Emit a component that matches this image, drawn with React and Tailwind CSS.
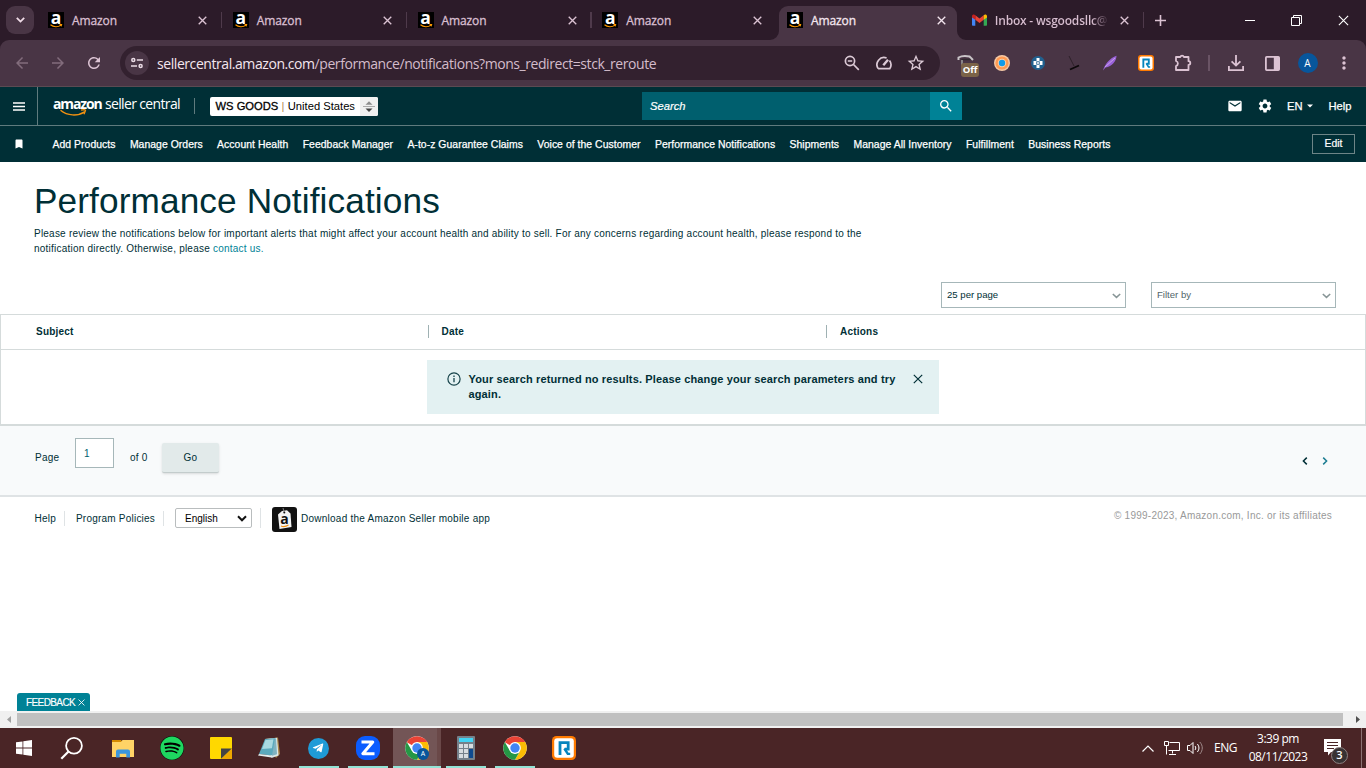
import { useState } from "react";
import {
  MdArrowBack,
  MdArrowForward,
  MdRefresh,
  MdStarOutline,
  MdSearch,
  MdMail,
  MdSettings,
  MdBookmark,
  MdMoreVert,
} from "react-icons/md";
import { FaSpotify, FaTelegramPlane } from "react-icons/fa";

const TABS = [
  { id: 1, title: "Amazon", separator: true },
  { id: 2, title: "Amazon", separator: true },
  { id: 3, title: "Amazon", separator: true },
  { id: 4, title: "Amazon" },
  { id: 5, title: "Amazon", active: true },
];

const NAV_LINKS = [
  "Add Products",
  "Manage Orders",
  "Account Health",
  "Feedback Manager",
  "A-to-z Guarantee Claims",
  "Voice of the Customer",
  "Performance Notifications",
  "Shipments",
  "Manage All Inventory",
  "Fulfillment",
  "Business Reports",
];

const AmazonIcon = () => (
  <div className="relative flex h-4 w-4 shrink-0 justify-center bg-black">
    <span className="mt-[-5px] font-['Open_Sans',sans-serif] text-[17.5px] font-bold leading-[21px] text-white">a</span>
    <svg className="absolute inset-0" width="16" height="16" viewBox="0 0 16 16" fill="none">
      <path d="M2.5 12.8C5.5 15.2 10 15.2 12.7 13.4M11.6 12.6h2l-.5 1.8" stroke="#f90" strokeWidth="1.1" />
    </svg>
  </div>
);

const CloseIcon = ({ size = 9, color = "#dcc3d3", width = 1.5 }) => (
  <svg width={size} height={size} viewBox="0 0 10 10" fill="none" className="shrink-0">
    <path d="M.8.8l8.4 8.4M9.2.8L.8 9.2" stroke={color} strokeWidth={width} />
  </svg>
);

const ChromeLogo = ({ size = 24 }) => (
  <svg width={size} height={size} viewBox="0 0 48 48">
    <circle cx="24" cy="24" r="23.5" fill="#fff" />
    <path d="M24 24L3.6 12.3A23.6 23.6 0 0 1 44.4 12.2H24z" fill="#ea4335" />
    <path d="M24 12.2h20.4A23.6 23.6 0 0 1 24 47.6L34.2 30z" fill="#fbbc04" />
    <path d="M3.6 12.2A23.6 23.6 0 0 0 24 47.6L34 30 24 35 14 30z" fill="#259745" />
    <circle cx="24" cy="24" r="11.8" fill="#fff" />
    <circle cx="24" cy="24" r="9.4" fill="#4285f4" />
  </svg>
);

const RingIcon = ({ size = 24 }) => (
  <svg width={size} height={size} viewBox="0 0 24 24" fill="none">
    <rect width="24" height="24" rx="4.5" fill="#ff7a00" />
    <rect x="2.2" y="2.2" width="19.6" height="19.6" rx="3" fill="#fff" />
    <path d="M8 19V6.7h8.2v6.5h-3.6" stroke="#0684bd" strokeWidth="2.8" />
    <path d="M12.4 12.5l3.4 5.4h2.4" stroke="#0684bd" strokeWidth="2.4" />
  </svg>
);

const BrowserTabs = () => (
  <div className="flex h-10 items-start bg-[#2c1b29] font-['Open_Sans',sans-serif]">
    <div className="ml-1.5 mr-1.5 mt-1.5 flex h-7 w-7 items-center justify-center rounded-[9px] bg-[#493545]">
      <svg width="9" height="6" viewBox="0 0 9 6" fill="none">
        <path d="M.8.9l3.7 3.7L8.2.9" stroke="#f0dce8" strokeWidth="1.8" />
      </svg>
    </div>
    {TABS.map((tab) => (
      <div key={tab.id} className="relative h-10 w-[184.75px] shrink-0">
        {tab.active && (
          <>
            <div className="absolute bottom-0 left-0 right-[7px] top-1.5 rounded-t-[9px] bg-[#493545]" />
            <svg className="absolute bottom-0 left-[-9px]" width="9" height="9" viewBox="0 0 9 9">
              <path d="M9 0v9H0a9 9 0 0 0 9-9z" fill="#493545" />
            </svg>
            <svg className="absolute bottom-0 right-[-2px]" width="9" height="9" viewBox="0 0 9 9">
              <path d="M0 0v9h9a9 9 0 0 1-9-9z" fill="#493545" />
            </svg>
          </>
        )}
        <div className="relative flex h-10 items-center pl-2">
          <AmazonIcon />
          <span
            className={`ml-2 flex-1 pt-[2px] text-[12px] font-medium tracking-[-0.1px] [-webkit-text-stroke:0.3px] ${
              tab.active ? "text-[#f4e6ef]" : "text-[#d9bfd1]"
            }`}
          >
            {tab.title}
          </span>
          <CloseIcon color={tab.active ? "#f4e6ef" : "#dcc3d3"} />
          <span
            className={`ml-[13.5px] mr-[2.5px] h-4 w-[1.5px] ${tab.separator ? "bg-[#4f3a4b]" : ""}`}
          />
        </div>
      </div>
    ))}
    <div className="flex h-10 flex-1 items-center pl-2">
      <svg width="15" height="12" viewBox="0 0 15 12">
        <path d="M0 1.8V11a.8.8 0 0 0 .8.8h2.5V4.4z" fill="#4285f4" />
        <path d="M11.7 4.4v7.4h2.5a.8.8 0 0 0 .8-.8V1.8z" fill="#34a853" />
        <path d="M3.3 1.2l4.2 3.3 4.2-3.3v4.6L7.5 9 3.3 5.8z" fill="#ea4335" />
        <path d="M11.7 1.2C13 .1 15 .6 15 2.4v1l-3.3 2.4z" fill="#fbbc04" />
        <path d="M3.3 1.2C2 .1 0 .6 0 2.4v1l3.3 2.4z" fill="#c5221f" />
      </svg>
      <span className="ml-2 w-[114px] whitespace-nowrap bg-gradient-to-r from-[#d9bfd1] from-85% to-[#2c1b29] bg-clip-text pt-[2px] text-[12px] font-semibold tracking-[-0.2px] text-transparent">
        Inbox - wsgoodsllc@
      </span>
      <span className="ml-[11px]">
        <CloseIcon />
      </span>
      <span className="ml-[14px] h-4 w-[1.5px] bg-[#4f3a4b]" />
      <svg className="ml-[11px]" width="11" height="11" viewBox="0 0 11 11">
        <path d="M5.5 0v11M0 5.5h11" stroke="#dcc3d3" strokeWidth="1.6" />
      </svg>
      <div className="ml-auto flex items-center pr-[17px]">
        <span className="mr-9 h-px w-2.5 bg-white" />
        <svg className="mr-9" width="11" height="11" viewBox="0 0 11 11" fill="none" stroke="#fff">
          <path d="M.5 2.5h8v8h-8zM2.5 2.5v-2h8v8h-2" />
        </svg>
        <CloseIcon size={11} color="#fff" width={1} />
      </div>
    </div>
  </div>
);

const Extensions = () => (
  <div className="flex items-center">
    <div className="relative h-6 w-6">
      <svg width="18" height="16" viewBox="0 0 18 16" fill="none" className="mt-0.5">
        <path d="M1.5 7V4.5Q6 2 12.5 3.5L16 7" stroke="#c9c4c7" strokeWidth="2" />
        <path d="M4.5 6.5h9" stroke="#302a2e" strokeWidth="1.5" />
        <path d="M5 7v6" stroke="#999" strokeWidth="1.6" />
      </svg>
      <span className="absolute left-1 top-3 flex h-[14px] w-[18px] items-center justify-center rounded-[3px] bg-[#7b6348] font-['Open_Sans',sans-serif] text-[9.5px] font-bold tracking-[-0.2px] text-white">
        Off
      </span>
    </div>
    <svg className="ml-[13px]" width="16" height="16" viewBox="0 0 16 16">
      <circle cx="8" cy="8" r="8" fill="#f6c9a6" />
      <circle cx="8" cy="8" r="6.6" fill="#ff9a52" />
      <circle cx="8" cy="8" r="4.2" fill="#ffd0a5" />
      <circle cx="8" cy="8" r="3.2" fill="#129be8" />
    </svg>
    <svg className="ml-[21px]" width="14" height="14" viewBox="0 0 14 14">
      <circle cx="7" cy="7" r="7" fill="#21618f" />
      <path d="M5.5 2h3v3h3v4h-3v3h-3V9h-3V5h3z" fill="#fff" />
      <path d="M5.3 5.3h3.4v3.4H5.3z" fill="#21618f" />
      <circle cx="7" cy="7" r="1" fill="#fff" />
    </svg>
    <svg className="ml-5" width="18" height="16" viewBox="0 0 18 16" fill="none">
      <path d="M4 1l5 10" stroke="#2d2029" />
      <path d="M5 14.5l9-4" stroke="#0c080a" strokeWidth="1.8" />
    </svg>
    <svg className="ml-[19px]" width="16" height="16" viewBox="0 0 16 16">
      <path d="M1 15.5C3 9 8 3 14.5.8c0 5.200-4.500 10.700-11 11.700z" fill="#9a62d8" />
      <path d="M3 12L13 3" stroke="#c9a5ec" strokeWidth="1" />
    </svg>
    <span className="ml-5">
      <RingIcon size={16} />
    </span>
    <svg className="ml-5" width="18" height="18" viewBox="0 0 18 18" fill="none">
      <path
        d="M2 3h4.300a1.900 1.900 0 0 1 3.600 0H14.500v4.200a1.800 1.800 0 0 1 0 3.600V16H2v-4a2.600 2.600 0 0 0 0-5z"
        stroke="#dcc3d3"
        strokeWidth="1.8"
        strokeLinejoin="round"
      />
    </svg>
    <span className="ml-4 h-4 w-[1.5px] bg-[#6a5465]" />
    <svg className="ml-[18px]" width="16" height="16" viewBox="0 0 16 16" fill="none" stroke="#dcc3d3" strokeWidth="1.8">
      <path d="M8 0v10M3.6 6.3L8 10.6l4.4-4.3M.9 11v4.1h14.2V11" />
    </svg>
    <svg className="ml-[21px]" width="15" height="15" viewBox="0 0 15 15">
      <rect x=".9" y=".9" width="13.2" height="13.2" rx=".8" fill="none" stroke="#dcc3d3" strokeWidth="1.8" />
      <path d="M8.8 1h5.5v13H8.8z" fill="#dcc3d3" />
    </svg>
    <span className="ml-[18px] flex h-5 w-5 items-center justify-center rounded-full bg-[#07569c] font-['Open_Sans',sans-serif] text-[10px] text-white">
      A
    </span>
    <MdMoreVert className="ml-4 h-5 w-5 text-[#dcc3d3]" />
  </div>
);

const AddressBar = () => (
  <div className="bg-[#2c1b29]">
    <div className="flex h-[47px] items-center rounded-t-[9px] border-b border-[#5b4a52] bg-[#493545]">
      <MdArrowBack className="ml-[13px] h-[18px] w-[18px] text-[#826c7c]" />
      <MdArrowForward className="ml-[18px] h-[18px] w-[18px] text-[#826c7c]" />
      <MdRefresh className="ml-[18px] h-[18px] w-[18px] text-[#dcc3d3]" />
      <div className="ml-[17px] flex h-[34px] w-[820px] items-center rounded-full bg-[#33212f] pl-[5px] pr-[14px]">
        <div className="flex h-6 w-6 items-center justify-center rounded-full bg-[#493545]">
          <svg width="12" height="12" viewBox="0 0 12 12" fill="none" stroke="#eadbe5" strokeWidth="1.5">
            <circle cx="2.3" cy="3" r="1.5" />
            <path d="M5.8 3H12M0 9h6" />
            <circle cx="9.6" cy="9" r="1.5" />
          </svg>
        </div>
        <span className="ml-2 flex-1 whitespace-nowrap font-['Open_Sans',sans-serif] text-[14px] tracking-[-0.43px] text-[#d3bccb]">
          <span className="text-[#f3e6ee]">sellercentral.amazon.com</span>
          /performance/notifications?mons_redirect=stck_reroute
        </span>
        <svg width="16" height="16" viewBox="0 0 16 16" fill="none" stroke="#dccad6" strokeWidth="1.7">
          <circle cx="6" cy="6" r="4.6" />
          <path d="M9.5 9.5l5.3 5.3M3.8 6h4.4" />
        </svg>
        <svg className="ml-4" width="16" height="14" viewBox="0 0 16 14" fill="none" stroke="#dccad6" strokeWidth="1.7">
          <path d="M2.2 12.6A7.1 7.1 0 0 1 10.6 2M13.5 4.6a7 7 0 0 1 .3 8H2.1" />
          <path d="M7.3 9.2L12 3.8" strokeWidth="2.4" />
        </svg>
        <MdStarOutline className="ml-[14px] h-[20px] w-[20px] text-[#dccad6]" />
      </div>
      <div className="ml-[17px]">
        <Extensions />
      </div>
    </div>
  </div>
);

const SellerHeader = () => (
  <header className="bg-[#002f36] text-white">
    <div className="flex h-[39px] items-center border-b border-[#5f7b7e]">
      <div className="flex h-full w-[38px] items-center justify-center border-r border-[#5f7b7e]">
        <svg width="12" height="9" viewBox="0 0 12 9">
          <path d="M0 1h12M0 4.5h12M0 8h12" stroke="#fff" strokeWidth="1.4" />
        </svg>
      </div>
      <div className="relative ml-[15px] flex h-full w-[128px] items-center whitespace-nowrap pb-[4px] font-['Open_Sans',sans-serif] text-[14px] leading-none">
        <span className="w-[52px] font-bold tracking-[-1.15px]">amazon</span>
        <span className="tracking-[-0.65px]">seller central</span>
        <svg className="absolute left-[7px] top-[22px]" width="27" height="8" viewBox="0 0 27 8" fill="none">
          <path d="M.5 1.3c7 5.7 17 6.2 24 1.6M21 1.2c2-.7 5-.7 4.4.6L24 5.2" stroke="#f29111" strokeWidth="1.3" />
        </svg>
      </div>
      <span className="ml-[13px] h-4 w-px bg-[#5f7b7e]" />
      <div className="ml-[15px] flex h-[19px] w-[168px] items-center overflow-hidden rounded-[2px] bg-white pl-[5.5px] font-['Liberation_Sans',sans-serif] text-[11.2px] text-black">
        <span className="[-webkit-text-stroke:0.3px]">WS GOODS</span>
        <span className="mx-[3.3px] text-[#b08a50]">|</span>
        <span>United States</span>
        <span className="ml-auto flex h-full w-[18px] items-center justify-center bg-[#f0f0f0]">
          <svg width="12" height="13" viewBox="0 0 12 13">
            <path d="M2.5 4.8L6 1.2l3.5 3.6z" fill="#8d8d8d" />
            <path d="M0 6.5h12" stroke="#aaa" />
            <path d="M2.5 8.4L6 12l3.5-3.6z" fill="#444" />
          </svg>
        </span>
      </div>
      <div className="ml-[264px] flex h-7 w-[320px]">
        <span className="flex flex-1 items-center bg-[#005f6e] pl-2 text-[11.2px] italic [-webkit-text-stroke:0.2px]">
          Search
        </span>
        <span className="flex w-8 items-center justify-center bg-[#008296]">
          <MdSearch className="h-4 w-4" />
        </span>
      </div>
      <div className="ml-auto flex items-center pr-[14.5px] text-[11.2px] [-webkit-text-stroke:0.25px]">
        <MdMail className="h-4 w-4" />
        <MdSettings className="ml-[14px] h-4 w-4" />
        <span className="ml-[14px]">EN</span>
        <svg className="ml-[5px]" width="6" height="4" viewBox="0 0 6 4">
          <path d="M0 .5h6L3 3.5z" fill="#fff" />
        </svg>
        <span className="ml-[15px]">Help</span>
      </div>
    </div>
    <nav className="flex h-9 items-center">
      <MdBookmark className="ml-[13px] h-3 w-3" />
      <div className="ml-[27.5px] flex gap-[14.4px] whitespace-nowrap pt-[2px] text-[10.4px] tracking-[0.05px] [-webkit-text-stroke:0.25px]">
        {NAV_LINKS.map((link) => (
          <span key={link}>{link}</span>
        ))}
      </div>
      <button className="ml-auto mr-[11px] flex h-5 w-[43px] items-center justify-center border border-[#6d8587] text-[10.4px] [-webkit-text-stroke:0.2px]">
        Edit
      </button>
    </nav>
  </header>
);

const Dropdown = ({ label, muted }) => (
  <div className="flex h-[26px] w-[185px] items-center justify-between border border-[#a6b7b9] bg-white pl-[5px] pr-1">
    <span className={`text-[9.6px] ${muted ? "text-[#52666a]" : "text-[#002f36]"}`}>{label}</span>
    <svg className="mt-0.5" width="9" height="6" viewBox="0 0 9 6" fill="none">
      <path d="M.8 1l3.7 3.4L8.2 1" stroke="#879596" strokeWidth="1.5" />
    </svg>
  </div>
);

const NotificationsPage = () => {
  const [page, setPage] = useState("1");
  const [showBanner, setShowBanner] = useState(true);

  return (
    <main className="relative h-[549px] overflow-hidden bg-white text-[10px] tracking-[0.22px] text-[#002f36]">
      <div className="px-[34px] pt-[17px]">
        <h1 className="h-11 text-[35.2px] leading-[44px] tracking-[0.12px]">Performance Notifications</h1>
        <p className="mt-[3px] w-[840px] leading-[15px]">
          Please review the notifications below for important alerts that might affect your account health and ability to sell. For any concerns regarding account health, please respond to the
          <br />
          notification directly. Otherwise, please <a className="text-[#008296]">contact us.</a>
        </p>
      </div>
      <div className="mt-[26px] flex justify-end gap-[25px] pr-[30px] tracking-normal">
        <Dropdown label="25 per page" />
        <Dropdown label="Filter by" muted />
      </div>

      <section className="mt-[6px] h-[112px] border border-b-2 border-[#d5dbdb]">
        <div className="flex h-[35px] items-center border-b border-[#d5dbdb] pb-[2px] font-bold">
          <span className="w-[427px] pl-[35px]">Subject</span>
          <span className="h-[13px] w-px bg-[#9fb1b3]" />
          <span className="w-[397px] pl-[12.5px]">Date</span>
          <span className="h-[13px] w-px bg-[#9fb1b3]" />
          <span className="pl-[13px]">Actions</span>
        </div>
        {showBanner && (
          <div className="mx-auto mt-2.5 flex h-[54px] w-[512px] bg-[#e3f1f2] pl-[20px] pt-3">
            <svg width="14" height="14" viewBox="0 0 14 14" fill="none">
              <circle cx="7" cy="7" r="6.1" stroke="#16434a" strokeWidth="1.2" />
              <path d="M7 6v4.3M7 3.5v1.4" stroke="#16434a" strokeWidth="1.3" />
            </svg>
            <p className="ml-[7.5px] w-[440px] text-[11px] font-bold leading-[15px] tracking-[0.14px]">
              Your search returned no results. Please change your search parameters and try
              <br />
              again.
            </p>
            <button className="ml-1 mt-0.5 h-[10px]" onClick={() => setShowBanner(false)}>
              <CloseIcon size={10} color="#002f36" width={1.2} />
            </button>
          </div>
        )}
      </section>

      <div className="flex h-[71px] items-start border-b-2 border-[#dfe3e5] bg-[#f8fafb] pl-[35px] pt-3">
        <span className="mt-3 w-10">Page</span>
        <input
          className="h-[30px] w-[39px] border border-[#a6b7b9] bg-white pl-2 text-[10px] text-[#005f6e] outline-none"
          value={page}
          onChange={(e) => setPage(e.target.value)}
        />
        <span className="ml-4 mt-3 w-[32px]">of 0</span>
        <button className="mt-[5px] h-[30px] w-[57px] rounded-[2px] border-b border-[#c3cccc] bg-[#e2eaea] shadow-sm">
          Go
        </button>
        <div className="ml-auto mr-[38px] mt-[19px] flex gap-[14px]">
          <svg width="6" height="8" viewBox="0 0 6 8" fill="none">
            <path d="M4.8.6L1.4 4l3.4 3.4" stroke="#002f36" strokeWidth="1.5" />
          </svg>
          <svg width="6" height="8" viewBox="0 0 6 8" fill="none">
            <path d="M1.2.6L4.6 4 1.2 7.4" stroke="#1d7d92" strokeWidth="1.5" />
          </svg>
        </div>
      </div>

      <footer className="flex items-start pl-[34.5px] pt-[9px]">
        <div className="flex h-6 items-center">
          <span>Help</span>
          <span className="ml-2 mr-[11px] h-[15px] w-px bg-[#dfe3e5]" />
          <span>Program Policies</span>
          <span className="ml-2 mr-[11px] h-[15px] w-px bg-[#dfe3e5]" />
          <div className="flex h-5 w-[77px] items-center justify-between rounded-[2px] border border-[#b9bdbe] pl-[9px] pr-1 tracking-normal text-black">
            English
            <svg width="10" height="7" viewBox="0 0 10 7" fill="none">
              <path d="M1 1.3l4 4 4-4" stroke="#111" strokeWidth="2" />
            </svg>
          </div>
          <span className="ml-2 mr-[11px] h-5 w-px bg-[#dfe3e5]" />
          <svg width="25" height="25" viewBox="0 0 25 25" className="mt-0.5">
            <rect width="25" height="25" rx="3" fill="#111" />
            <path d="M6 7.500L10 4l5-.8 3.500 3.300L19.500 20 7.500 22z" fill="#f4f4f4" />
            <path d="M12.200 5.500L11 1" stroke="#999" strokeWidth=".8" />
            <circle cx="12.300" cy="5.500" r="1" fill="#111" />
            <path d="M9 19c2.500 1 5 .6 7.500-.9" stroke="#f29111" strokeWidth="1.2" fill="none" />
            <text x="8.300" y="17" fontSize="14" fontWeight="bold" fontFamily="Open Sans, sans-serif" fill="#111">a</text>
          </svg>
          <span className="ml-1 tracking-[0.24px]">Download the Amazon Seller mobile app</span>
        </div>
        <span className="ml-auto mr-[34px] mt-[2px] tracking-[0.24px] text-[#999]">
          © 1999-2023, Amazon.com, Inc. or its affiliates
        </span>
      </footer>

      <div className="absolute bottom-0 left-[17px] flex h-[18px] w-[73px] items-center rounded-t-[3px] bg-[#008296] pl-[9px] text-[10px] tracking-[-0.6px] text-white [-webkit-text-stroke:0.15px]">
        FEEDBACK
        <span className="ml-[3px]">
          <CloseIcon size={7} color="#fff" width={1.2} />
        </span>
      </div>
    </main>
  );
};

const ScrollBar = () => (
  <div className="flex h-[17px] items-center bg-[#f0f0f0]">
    <span className="flex w-[17px] justify-center">
      <svg width="4" height="7" viewBox="0 0 4 7"><path d="M4 0v7L0 3.5z" fill="#a0a0a0" /></svg>
    </span>
    <span className="h-[13px] w-[1326px] bg-[#c0c0c0]" />
    <span className="flex flex-1 justify-center pl-1.5">
      <svg width="4" height="7" viewBox="0 0 4 7"><path d="M0 0v7l4-3.5z" fill="#505050" /></svg>
    </span>
  </div>
);

const TaskItem = ({ children, running }) => (
  <div className="relative flex h-10 w-[49px] items-center justify-center">
    {children}
    {running && <span className="absolute bottom-0 left-[5px] h-0.5 w-10 bg-[#92e3d5]" />}
  </div>
);

const Taskbar = () => (
  <div className="flex h-10 items-center bg-[#4a2526] font-['Open_Sans',sans-serif] text-white">
    <div className="flex w-12 justify-center">
      <svg width="16" height="16" viewBox="0 0 16 16" fill="#fff">
        <path d="M0 2.3L6.5 1.4v6.2H0zM7.3 1.3L16 0v7.6H7.3zM0 8.4h6.5v6.2L0 13.7zM7.3 8.4H16V16l-8.7-1.3z" />
      </svg>
    </div>
    <div className="flex w-[50px] justify-center pr-[3px]">
      <svg width="23" height="23" viewBox="0 0 23 23" fill="none" stroke="#fff">
        <circle cx="14" cy="8.8" r="7.9" strokeWidth="1.8" />
        <path d="M8.5 14.5l-7.2 7.2" strokeWidth="2.2" />
      </svg>
    </div>
    <TaskItem>
      <svg width="22" height="19" viewBox="0 0 22 19">
        <path d="M0 1h9l1.5 2H0z" fill="#d58b00" />
        <path d="M0 3h9l1.5-2H22v17H0z" fill="#ffd366" />
        <path d="M4 18.5v-6a2 2 0 0 1 2-2h10a2 2 0 0 1 2 2v6h-3.7v-3.7H7.7v3.7z" fill="#3a96dd" />
      </svg>
    </TaskItem>
    <TaskItem>
      <span className="flex h-6 w-6 items-center justify-center rounded-full bg-black">
        <FaSpotify className="h-6 w-6 text-[#1ed760]" />
      </span>
    </TaskItem>
    <TaskItem>
      <svg width="22" height="22" viewBox="0 0 22 22">
        <rect width="22" height="22" rx="1" fill="#ffd800" />
        <path d="M11 22V11.5h11z" fill="#444" />
        <path d="M11 22l11-10.5V21a1 1 0 0 1-1 1z" fill="#eda800" />
      </svg>
    </TaskItem>
    <TaskItem>
      <svg width="23" height="22" viewBox="0 0 23 22">
        <path d="M7 2L20 .5 22 17l-4 4z" fill="#a9854a" />
        <path d="M7 2L19 .8l1.5 17.7-7 2.5z" fill="#dce8e9" />
        <path d="M11 2l7-.8 1 16-5 1.5z" fill="#7fb3c1" />
        <path d="M7 2l10-.8-3 17.3L1 17z" fill="#5ba9bd" />
        <path d="M7.5 3l8-.7-1.6 9L4 12z" fill="#a9d9e1" />
        <path d="M1 17l13 1.5-.5 2L0 18.6z" fill="#e5eeee" />
      </svg>
    </TaskItem>
    <TaskItem running>
      <span className="flex h-[21px] w-[21px] items-center justify-center rounded-full bg-[#1f9bd7]">
        <FaTelegramPlane className="mr-0.5 h-3 w-3" />
      </span>
    </TaskItem>
    <TaskItem running>
      <svg width="24" height="24" viewBox="0 0 24 24" fill="none">
        <rect width="24" height="24" rx="9" fill="#0b5cff" />
        <path d="M5.5 6h11.3L6.8 17.7h11.7" stroke="#fff" strokeWidth="3" strokeLinejoin="round" />
      </svg>
      <span className="absolute bottom-0 right-1 h-0.5 w-2 bg-[#76aaa2]" />
    </TaskItem>
    <div className="relative ml-px flex h-10 w-12 items-center justify-center border-r-[4px] border-[#6a4848] bg-[#735556] pl-1">
      <ChromeLogo />
      <span className="absolute left-6 top-5 flex h-3 w-3 items-center justify-center rounded-full bg-[#07569c] text-[7px]">
        A
      </span>
      <span className="absolute bottom-0 left-0 h-0.5 w-12 bg-[#92e3d5]" />
    </div>
    <TaskItem running>
      <svg width="18" height="24" viewBox="0 0 18 24">
        <rect width="18" height="24" rx="1" fill="#75808a" />
        <path d="M2 2h14v4H2z" fill="#42d3f4" />
        <path d="M2 8h4v4H2zM7 8h4v4H7zM12 8h4v4h-4zM2 13h4v4H2zM7 13h4v4H7zM2 18h4v4H2zM7 18h4v4H7z" fill="#d7dce0" />
        <path d="M12 13h4v9h-4z" fill="#0f4a8f" />
      </svg>
    </TaskItem>
    <TaskItem running>
      <ChromeLogo />
    </TaskItem>
    <TaskItem>
      <RingIcon />
    </TaskItem>

    <div className="ml-auto flex h-10 items-center">
      <svg width="12" height="7" viewBox="0 0 12 7" fill="none" stroke="#fff" strokeWidth="1.2">
        <path d="M.5 6.5L6 1l5.5 5.5" />
      </svg>
      <svg className="ml-2.5" width="16" height="14" viewBox="0 0 16 14" fill="none" stroke="#fff">
        <path d="M5.5 1.5h10v8h-11M2.5 5v8.500M.5.5h4v4h-4zM8.500 9.500v3M5 13.500h7" />
      </svg>
      <svg className="ml-[7px]" width="17" height="14" viewBox="0 0 17 14" fill="none" stroke="#fff">
        <path d="M.5 4.5H3l3-3v11l-3-3H.5zM8 5c1 1.2 1 2.8 0 4M10.3 3c2.2 2.3 2.2 5.7 0 8" />
        <path d="M12.8 1c3.3 3.5 3.3 8.5 0 12" stroke="#a08b8b" />
      </svg>
      <span className="ml-2.5 w-[25px] text-[12px] tracking-[-0.5px]">ENG</span>
      <div className="ml-[9px] w-[60px] whitespace-nowrap text-center text-[12px] leading-[18px] tracking-[-0.5px]">
        <div>3:39 pm</div>
        <div>08/11/2023</div>
      </div>
      <div className="relative ml-4 h-6 w-6">
        <svg width="17" height="17" viewBox="0 0 17 17" className="mt-[3px]">
          <path d="M0 0h17v13H7l-3 3.5V13H0z" fill="#fff" />
          <path d="M3 3.5h11M3 6.5h11M3 9.5h7" stroke="#4a2526" />
        </svg>
        <span className="absolute left-[7px] top-[11px] flex h-[17px] w-[17px] items-center justify-center rounded-full border border-[#8c8080] bg-[#383233] text-[11px] font-semibold">
          3
        </span>
      </div>
      <span className="ml-[13px] mr-1 h-10 w-px bg-[#8c7273]" />
    </div>
  </div>
);

const App = () => (
  <div className="h-[768px] w-[1366px] overflow-hidden bg-white font-['Liberation_Sans',Arial,sans-serif]">
    <BrowserTabs />
    <AddressBar />
    <SellerHeader />
    <NotificationsPage />
    <ScrollBar />
    <Taskbar />
  </div>
);

export default App;
